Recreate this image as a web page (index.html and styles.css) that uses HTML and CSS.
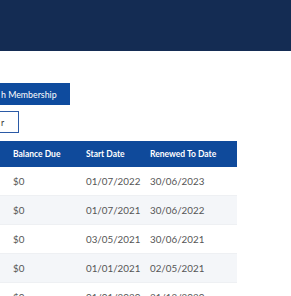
FILE: index.html
```html
<!DOCTYPE html>
<html>
<head>
<meta charset="utf-8">
<link rel="stylesheet" href="styles.css">
</head>
<body>
<header class="topbar"></header>
<main class="content">
  <div class="actions">
    <button class="btn btn-primary">h Membership</button>
    <button class="btn btn-outline">r</button>
  </div>
  <table class="grid">
    <thead>
      <tr><th>Balance Due</th><th>Start Date</th><th>Renewed To Date</th></tr>
    </thead>
    <tbody>
      <tr><td>$0</td><td>01/07/2022</td><td>30/06/2023</td></tr>
      <tr><td>$0</td><td>01/07/2021</td><td>30/06/2022</td></tr>
      <tr><td>$0</td><td>03/05/2021</td><td>30/06/2021</td></tr>
      <tr><td>$0</td><td>01/01/2021</td><td>02/05/2021</td></tr>
      <tr><td>$0</td><td>01/01/2020</td><td>31/12/2020</td></tr>
    </tbody>
  </table>
</main>
</body>
</html>
```
FILE: styles.css
```css
html, body {
  margin: 0;
  padding: 0;
  background: #ffffff;
  font-family: Lato, "Open Sans", sans-serif;
  overflow: hidden;
}
.topbar {
  height: 51px;
  background: #142c53;
}
.content {
  padding-top: 32px;
}
.actions {
  display: flex;
  flex-direction: column;
  align-items: flex-start;
  gap: 6px;
}
.btn {
  font-family: Lato, sans-serif;
  font-size: 8.8px;
  margin: 0;
  border-radius: 0;
  text-align: left;
  cursor: pointer;
}
.btn-primary {
  width: 70px;
  height: 22px;
  padding: 0 0 0 1px;
  background: #0e4b9e;
  color: #ffffff;
  border: none;
}
.btn-outline {
  width: 19px;
  height: 22px;
  padding: 0 0 0 1px;
  background: #ffffff;
  color: #333;
  border: 1px solid #2b5aa6;
  border-left: none;
}
.grid {
  margin-top: 8px;
  width: 237px;
  border-collapse: collapse;
  font-size: 9.8px;
}
.grid th {
  background: #0f4a9b;
  color: #ffffff;
  font-weight: 700;
  font-size: 8.5px;
  text-align: left;
  height: 26px;
  padding: 0;
}
.grid td {
  height: 28px;
  padding: 0;
  color: #555;
  border-bottom: 1px solid #eef0f3;
}
.grid th:first-child, .grid td:first-child { padding-left: 13px; width: 73px; }
.grid th:nth-child(2), .grid td:nth-child(2) { width: 64px; }
.grid tbody tr:nth-child(even) td { background: #f4f6f9; }
```
